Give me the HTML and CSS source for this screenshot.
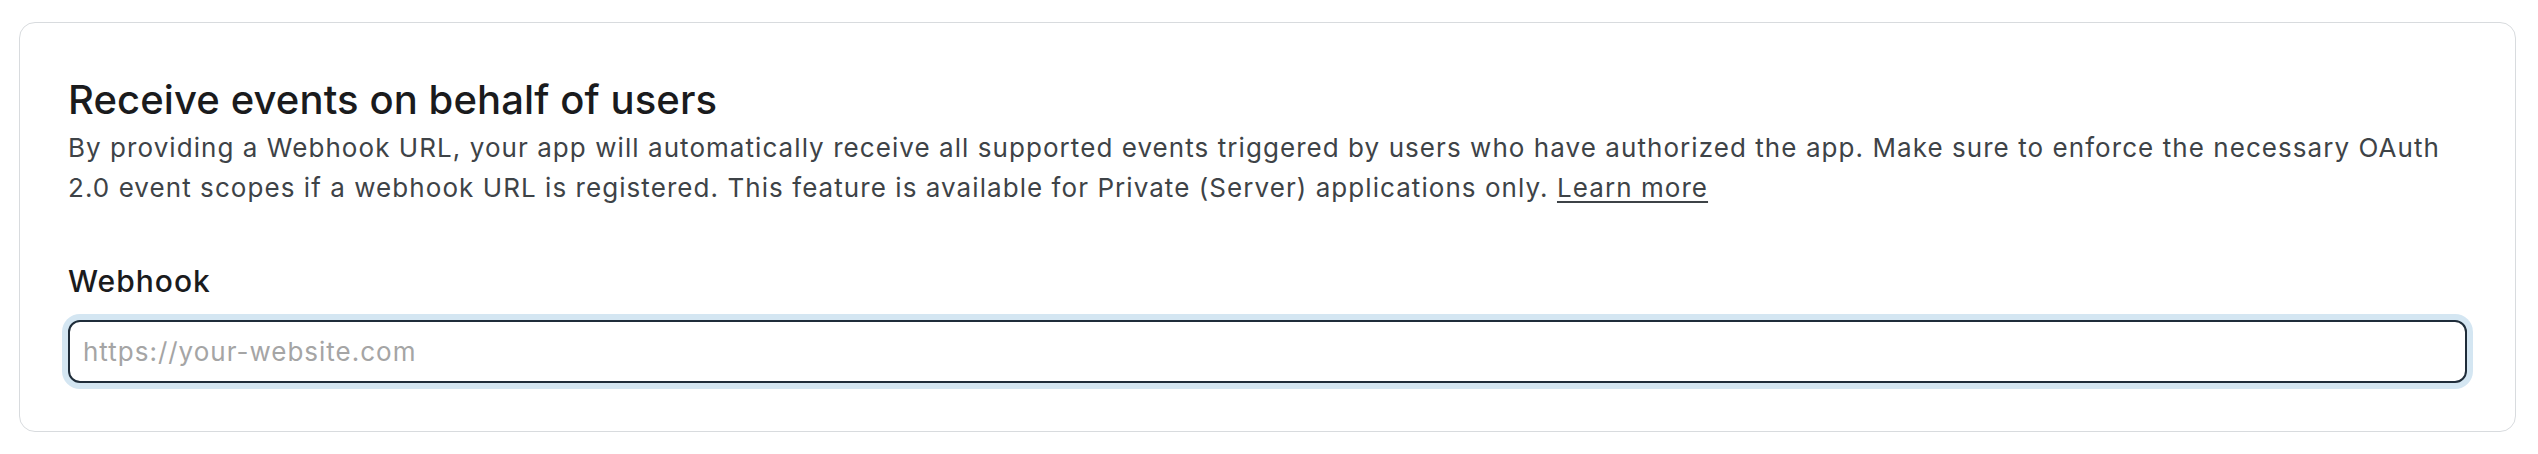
FILE: index.html
```html
<!DOCTYPE html>
<html lang="en">
<head>
  <meta charset="UTF-8" />
  <meta name="viewport" content="width=device-width, initial-scale=1.0" />
  <title>Webhook settings</title>
  <link rel="stylesheet" href="styles.css">
</head>
<body>
  <section class="panel">
    <h2 class="panel-title">Receive events on behalf of users</h2>
    <p class="panel-desc">
      By providing a Webhook URL, your app will automatically receive all supported events triggered by users who have authorized the app. Make sure to enforce the necessary OAuth 2.0 event scopes if a webhook URL is registered. This feature is available for Private (Server) applications only. <a href="#" class="learn-link">Learn more</a>
    </p>

    <div class="field">
      <label class="field-label" for="webhookUrl">Webhook</label>
      <input class="field-input" id="webhookUrl" type="text" placeholder="https://your-website.com" />
    </div>
  </section>
</body>
</html>
```

FILE: styles.css
```css
html, body {
  margin: 0;
  padding: 0;
  background: #ffffff;
  font-family: 'Inter', 'Liberation Sans', sans-serif;
  color: #1b1c1e;
}

body {
  padding: 22px 22px 0 19px;
}

.panel {
  border: 1px solid #d8dbde;
  border-radius: 16px;
  padding: 53px 48px 48px 48px;
  background: #ffffff;
}

.panel-title {
  margin: 0;
  font-size: 40px;
  line-height: 48px;
  font-weight: 500;
  letter-spacing: 0.1px;
  color: #1a1b1d;
}

.panel-desc {
  margin: 4px 0 0 0;
  font-size: 26px;
  line-height: 40px;
  letter-spacing: 1.06px;
  color: #3e4347;
}

.learn-link {
  color: #3e4347;
  text-decoration: underline;
  text-underline-offset: 4px;
  text-decoration-thickness: 2px;
}

.field {
  display: flex;
  flex-direction: column;
  margin-top: 53px;
}

.field-label {
  font-size: 30px;
  line-height: 40px;
  font-weight: 500;
  letter-spacing: 1px;
  color: #1a1b1d;
  margin-bottom: 19px;
}

.field-input {
  box-sizing: border-box;
  width: 100%;
  height: 63px;
  padding: 0 13px;
  border: 2px solid #1f2d3a;
  border-radius: 12px;
  box-shadow: 0 0 0 6px #d4e6f2;
  font-family: 'Inter', 'Liberation Sans', sans-serif;
  font-size: 26px;
  letter-spacing: 1px;
  color: #1a1b1d;
  outline: none;
}

.field-input::placeholder {
  color: #a5a5a5;
}
```
